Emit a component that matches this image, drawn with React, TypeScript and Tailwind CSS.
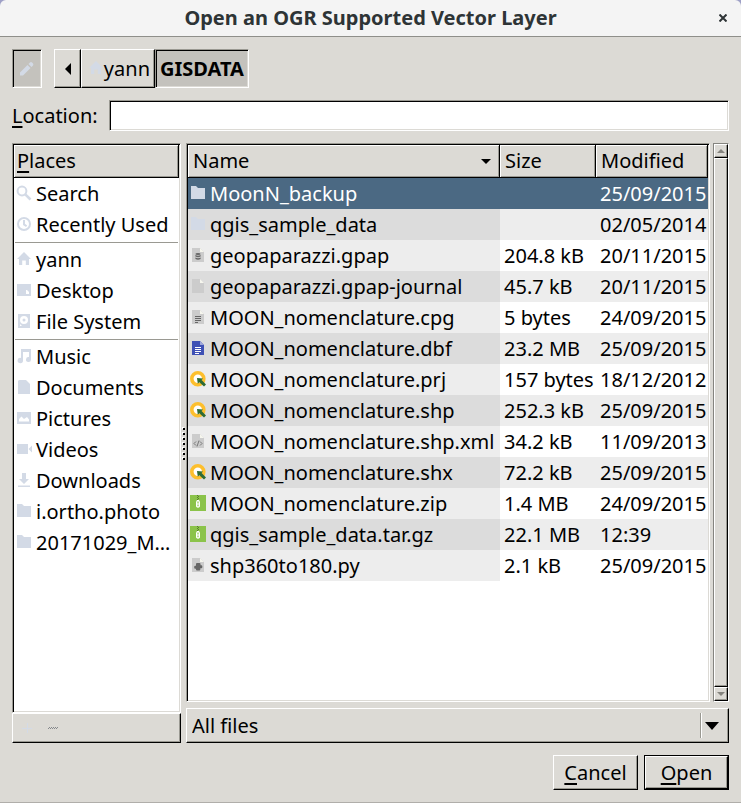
import type { ReactNode } from "react";

const raised =
  "border border-t-white border-l-white border-r-black border-b-black shadow-[inset_-1px_-1px_0_#9a9992]";
const sunken =
  "border border-t-[#9a9992] border-l-[#9a9992] border-r-white border-b-white shadow-[inset_1px_1px_0_#000,inset_-1px_-1px_0_#dcdad5]";
const headerCell =
  "border-r border-b border-black bg-[#dcdad5] text-left font-normal shadow-[inset_1px_1px_0_#fff,inset_-1px_-1px_0_#9a9992]";

type IconName =
  | "search" | "recent" | "home" | "desktop" | "disk" | "music" | "document" | "pictures"
  | "video" | "download" | "folder" | "database" | "blank" | "text" | "dbf" | "qgis"
  | "xml" | "zip" | "python";

const page = (fill: string, fold: string, detail?: ReactNode) => (
  <>
    <path fill={fill} d="M2 1h8l4 4v10H2z" />
    <path fill={fold} d="M10 1l4 4h-4z" />
    {detail}
  </>
);

const drawings: Record<IconName, ReactNode> = {
  search: (
    <g fill="none" stroke="#d3dae6" strokeWidth="2">
      <circle cx="6" cy="6" r="4.4" />
      <path d="M9.3 9.3L14.500 14.500" strokeWidth="2.6" />
    </g>
  ),
  recent: (
    <g fill="none" stroke="#d3dae6" strokeWidth="2">
      <circle cx="8" cy="8" r="6" />
      <path d="M8 4v4.400l2.600 1.800" />
    </g>
  ),
  home: <path fill="#d3dae6" d="M8 1l7 7h-2v6H9.800V9.500H6.200V14H3V8H1z" />,
  desktop: <path fill="#d3dae6" fillRule="evenodd" d="M1 2h14v12H1zM10 8v4h3v-2l-2-2z" />,
  disk: (
    <path
      fill="#d3dae6"
      fillRule="evenodd"
      d="M2 1h12v14H2zM8 3a4 4 0 1 0 0 8a4 4 0 0 0 0-8zM8 5.500a1.500 1.500 0 1 1 0 3a1.500 1.500 0 0 1 0-3zM4 11v2h2z"
    />
  ),
  music: (
    <path
      fill="#d3dae6"
      d="M5 1h10v10.500a2.500 2.500 0 1 1-2-2.450V4H7v8.500a2.700 2.700 0 1 1-2-2.550z"
    />
  ),
  document: <path fill="#d3dae6" d="M3 1h7l4 4v10H2V2z" />,
  pictures: (
    <>
      <path fill="#d3dae6" d="M1 2h14v12H1z" />
      <path fill="#fff" d="M3 11.500V9l2.500-2.500L8 9l3-2 2 2.500v2z" />
    </>
  ),
  video: <path fill="#d3dae6" d="M1 3h11v10H1zM12.500 8L16 4.500v7z" />,
  download: <path fill="#d3dae6" d="M6 1h4v6h3l-5 5-5-5h3zM2 13.500h12V15H2z" />,
  folder: <path fill="#d3dae6" d="M1 1h5l2 2h7v11H1z" />,
  database: page(
    "#cccccc",
    "#f6f6ee",
    <g fill="#666">
      <ellipse cx="8" cy="7" rx="2.600" ry="1" />
      <path d="M5.400 8q2.600 1.400 5.200 0v1.500q-2.600 1.400-5.200 0zM5.400 10.500q2.600 1.400 5.200 0V12q-2.600 1.400-5.200 0z" />
    </g>,
  ),
  blank: page("#cccccc", "#f6f6ee"),
  text: page("#cccccc", "#f6f6ee", <path fill="#666" d="M5 7h6v1H5zM5 9h6v1H5zM5 11h6v1H5zM5 13h3v1H5z" />),
  dbf: page("#3f51b5", "#9fa8da", <path fill="#fff" d="M5 7h6v1H5zM5 9h6v1H5zM5 11h6v1H5zM5 13h4v1H5z" />),
  qgis: (
    <>
      <circle cx="7.800" cy="7.800" r="6" fill="#fff" stroke="#fdbf2d" strokeWidth="3.600" />
      <path fill="#2e6b34" d="M7 7l6 .5-1.400 1.400L16 13.500 14 15.500 9.300 11.200 7.800 12.800z" />
    </>
  ),
  xml: page(
    "#cccccc",
    "#f6f6ee",
    <path fill="none" stroke="#777" d="M6 8.500l-2 2 2 2M10 8.500l2 2-2 2M9 7.500l-2 6" />,
  ),
  zip: (
    <>
      <path fill="#8bc34a" d="M0 0h16v16H0z" />
      <path fill="#587c2e" d="M7 0h1v1H7zM8 1h1v1H8zM7 2h1v1H7zM8 3h1v1H8zM7 4h1v1H7z" />
      <path
        fill="#fff"
        fillRule="evenodd"
        d="M7 5h2l1 2v4.500q-2 2.500-4 0V7zM7.400 6.500v2h1.200v-2zM7.400 9.500v1.800h1.200V9.500z"
      />
    </>
  ),
  python: page(
    "#cccccc",
    "#f6f6ee",
    <path
      fill="#666"
      d="M7 6h2.500q1 0 1 1v1.300h.8q1 0 1 1v1q0 1-1 1h-1v1.200q0 1-1 1H7q-1 0-1-1v-.8h-.8q-1 0-1-1v-1q0-1 1-1H6V7q0-1 1-1z"
    />,
  ),
};

function Icon({ name }: { name: IconName }) {
  return (
    <svg className="mb-px size-4 shrink-0" viewBox="0 0 16 16" aria-hidden="true">
      {drawings[name]}
    </svg>
  );
}

type Place = { icon: IconName; label: string };

const placeGroups: Place[][] = [
  [
    { icon: "search", label: "Search" },
    { icon: "recent", label: "Recently Used" },
  ],
  [
    { icon: "home", label: "yann" },
    { icon: "desktop", label: "Desktop" },
    { icon: "disk", label: "File System" },
  ],
  [
    { icon: "music", label: "Music" },
    { icon: "document", label: "Documents" },
    { icon: "pictures", label: "Pictures" },
    { icon: "video", label: "Videos" },
    { icon: "download", label: "Downloads" },
    { icon: "folder", label: "i.ortho.photo" },
    { icon: "folder", label: "20171029_M…" },
  ],
];

type FileRow = { icon: IconName; name: string; size: string; modified: string };

const files: FileRow[] = [
  { icon: "folder", name: "MoonN_backup", size: "", modified: "25/09/2015" },
  { icon: "folder", name: "qgis_sample_data", size: "", modified: "02/05/2014" },
  { icon: "database", name: "geopaparazzi.gpap", size: "204.8 kB", modified: "20/11/2015" },
  { icon: "blank", name: "geopaparazzi.gpap-journal", size: "45.7 kB", modified: "20/11/2015" },
  { icon: "text", name: "MOON_nomenclature.cpg", size: "5 bytes", modified: "24/09/2015" },
  { icon: "dbf", name: "MOON_nomenclature.dbf", size: "23.2 MB", modified: "25/09/2015" },
  { icon: "qgis", name: "MOON_nomenclature.prj", size: "157 bytes", modified: "18/12/2012" },
  { icon: "qgis", name: "MOON_nomenclature.shp", size: "252.3 kB", modified: "25/09/2015" },
  { icon: "xml", name: "MOON_nomenclature.shp.xml", size: "34.2 kB", modified: "11/09/2013" },
  { icon: "qgis", name: "MOON_nomenclature.shx", size: "72.2 kB", modified: "25/09/2015" },
  { icon: "zip", name: "MOON_nomenclature.zip", size: "1.4 MB", modified: "24/09/2015" },
  { icon: "zip", name: "qgis_sample_data.tar.gz", size: "22.1 MB", modified: "12:39" },
  { icon: "python", name: "shp360to180.py", size: "2.1 kB", modified: "25/09/2015" },
];

function Mnemonic({ text }: { text: string }) {
  return (
    <>
      <span className="underline decoration-2 underline-offset-3">{text[0]}</span>
      {text.slice(1)}
    </>
  );
}

function TitleBar() {
  return (
    <header className="bg-[#9ea0c6]">
      <div className="flex h-[37px] items-center rounded-t-md border-b border-[#8f8f8a] bg-[#f4f4f4] pr-3 pl-6 text-[#2e3436]">
        <h1 className="flex-1 text-center font-bold">Open an OGR Supported Vector Layer</h1>
        <button type="button" aria-label="Close" className="flex h-6 w-3 items-center justify-center">
          <svg className="size-2" viewBox="0 0 8 8" aria-hidden="true">
            <path d="M.5 .5l7 7M7.500 .5l-7 7" stroke="#2e3436" strokeWidth="2" />
          </svg>
        </button>
      </div>
    </header>
  );
}

function PathBar() {
  return (
    <nav aria-label="Folder path" className="flex h-[39px] gap-3">
      <button
        type="button"
        aria-label="Type a file name"
        className={`flex w-[30px] items-center justify-center bg-[#c4c2bd] ${sunken}`}
      >
        <svg className="size-4" viewBox="0 0 16 16" aria-hidden="true">
          <path fill="#d3dae6" d="M1 14.500v-3l7.500-7.500 3 3L4 14.500zM9.500 3L11 1.500q1-.8 2 0l1 1q.8 1 0 2L12.500 6z" />
        </svg>
      </button>
      <div className="flex">
        <button type="button" aria-label="Back" className={`flex w-[27px] items-center justify-center ${raised}`}>
          <svg className="h-3 w-1.5" viewBox="0 0 6 12" aria-hidden="true">
            <path d="M6 0v12L0 6z" />
          </svg>
        </button>
        <button type="button" className={`flex w-[74px] items-center justify-end pr-1 ${raised}`}>
          <Icon name="home" />
          yann
        </button>
        <button type="button" className={`flex items-center bg-[#c4c2bd] px-1 font-bold ${sunken}`}>
          GISDATA
        </button>
      </div>
    </nav>
  );
}

function PlacesPanel() {
  return (
    <aside className="flex w-[169px] shrink-0 flex-col">
      <div className={`flex-1 bg-white p-px ${sunken}`}>
        <h2 className={`h-[33px] pl-[3px] leading-8 ${headerCell}`}>
          <Mnemonic text="Places" />
        </h2>
        {placeGroups.map((group, index) => (
          <div key={index}>
            {index > 0 && <hr className="mx-px mt-0.5 mb-px border-[#9a9992]" />}
            <ul>
              {group.map((place) => (
                <li key={place.label} className="flex h-[31px] items-center gap-1 pl-0.5 whitespace-nowrap">
                  <Icon name={place.icon} />
                  {place.label}
                </li>
              ))}
            </ul>
          </div>
        ))}
      </div>
      <div className={`flex h-[30px] items-center gap-2.5 px-1.5 ${raised}`}>
        <button type="button" aria-label="Add bookmark" className="flex size-4 items-center justify-center">
          <svg className="size-3" viewBox="0 0 12 12" aria-hidden="true">
            <path d="M1 6.500h10M6.500 1v10" stroke="#d3dae6" />
          </svg>
        </button>
        <button type="button" aria-label="Remove bookmark" className="flex size-4 items-center justify-center" disabled>
          <svg className="h-0.5 w-2.5" viewBox="0 0 10 2" aria-hidden="true">
            <path d="M0 1.500h10" stroke="#85888c" strokeDasharray="1 1" />
            <path d="M1 .5h9" stroke="#85888c" strokeDasharray="1 1" />
          </svg>
        </button>
      </div>
    </aside>
  );
}

function SplitHandle() {
  return (
    <div role="separator" aria-orientation="vertical" className="flex w-[5px] shrink-0 items-center justify-center">
      <svg className="h-[33px] w-1" viewBox="0 0 4 33" aria-hidden="true">
        {[0, 5, 10, 15, 20, 25, 30].map((y) => (
          <g key={y}>
            <path fill="#fff" d={`M0 ${y}h2v2H0z`} />
            <path d={`M1 ${y + 1}h2v2H1z`} />
          </g>
        ))}
      </svg>
    </div>
  );
}

function FileTable() {
  return (
    <div className={`min-w-0 flex-1 bg-white p-px ${sunken}`}>
      <table className="w-full table-fixed border-separate border-spacing-0">
        <colgroup>
          <col />
          <col className="w-24" />
          <col className="w-28" />
        </colgroup>
        <thead>
          <tr className="h-[33px]">
            <th scope="col" className={`py-0 pr-2 pl-[5px] ${headerCell}`}>
              <span className="flex items-center justify-between">
                Name
                <svg className="h-[5px] w-2.5" viewBox="0 0 10 5" aria-hidden="true">
                  <path d="M0 0h10L5 5z" />
                </svg>
              </span>
            </th>
            <th scope="col" className={`py-0 pl-[5px] ${headerCell}`}>Size</th>
            <th scope="col" className={`py-0 pl-[5px] ${headerCell}`}>Modified</th>
          </tr>
        </thead>
        <tbody>
          {files.map((file, index) => {
            const odd = index % 2 === 1;
            const selected = index === 0;
            const nameFill = selected ? "" : odd ? "bg-[#dcdcdc]" : "bg-[#ededed]";
            const cellFill = selected ? "" : odd ? "bg-[#ededed]" : "bg-white";
            return (
              <tr
                key={file.name}
                aria-selected={selected}
                className={`h-[31px] ${selected ? "bg-[#4b6983] text-white" : ""}`}
              >
                <td className={`p-0 pl-0.5 ${nameFill}`}>
                  <span className="flex items-center gap-1 whitespace-nowrap">
                    <Icon name={file.icon} />
                    {file.name}
                  </span>
                </td>
                <td className={`p-0 pl-1 whitespace-nowrap ${cellFill}`}>{file.size}</td>
                <td className={`p-0 pl-1 whitespace-nowrap ${cellFill}`}>{file.modified}</td>
              </tr>
            );
          })}
        </tbody>
      </table>
    </div>
  );
}

function ScrollBar() {
  return (
    <div className="ml-[3px] flex w-4 shrink-0 flex-col border border-t-[#85847f] border-r-white border-b-white border-l-[#85847f]">
      <button type="button" aria-label="Scroll up" className={`flex h-3.5 items-center justify-center ${raised}`}>
        <svg className="h-1 w-2" viewBox="0 0 8 4" aria-hidden="true">
          <path fill="#85847f" d="M4 0l4 4H0z" />
        </svg>
      </button>
      <div className={`flex-1 ${raised}`} />
      <button type="button" aria-label="Scroll down" className={`flex h-3.5 items-center justify-center ${raised}`}>
        <svg className="h-1 w-2" viewBox="0 0 8 4" aria-hidden="true">
          <path fill="#85847f" d="M0 0h8L4 4z" />
        </svg>
      </button>
    </div>
  );
}

export default function App() {
  return (
    <div className="flex min-h-screen flex-col border-b border-[#b0aeaa] bg-[#dcdad5] font-['Noto_Sans',sans-serif] text-[20px] leading-[30px] text-black">
      <TitleBar />
      <main className="flex flex-1 flex-col p-3">
        <PathBar />
        <div className="mt-3 flex h-[31px] items-center gap-[11px]">
          <label htmlFor="location">
            <Mnemonic text="Location:" />
          </label>
          <input id="location" type="text" className={`h-full min-w-0 flex-1 bg-white px-1.5 outline-none ${sunken}`} />
        </div>
        <div className="mt-3 flex flex-1">
          <PlacesPanel />
          <SplitHandle />
          <section className="flex min-w-0 flex-1 flex-col gap-1.5">
            <div className="flex flex-1">
              <FileTable />
              <ScrollBar />
            </div>
            <div className={`relative h-[35px] ${raised}`}>
              <select
                aria-label="File type"
                className="size-full appearance-none bg-transparent pr-8 pl-[5px] outline-none"
                defaultValue="all"
              >
                <option value="all">All files</option>
              </select>
              <div className="pointer-events-none absolute inset-y-1 right-0 flex w-7 items-center border-l border-[#9a9992] pl-1 shadow-[inset_1px_0_0_#fff]">
                <svg className="h-2 w-3.5" viewBox="0 0 14 8" aria-hidden="true">
                  <path d="M0 0h14L7 8z" />
                </svg>
              </div>
            </div>
          </section>
        </div>
        <div className="mt-3 flex h-[35px] justify-end gap-1.5">
          <button type="button" className={`w-[85px] ${raised}`}>
            <Mnemonic text="Cancel" />
          </button>
          <button type="submit" className="w-[85px] border border-black">
            <span className={`flex size-full items-center justify-center ${raised}`}>
              <span>
                <Mnemonic text="Open" />
              </span>
            </span>
          </button>
        </div>
      </main>
    </div>
  );
}
